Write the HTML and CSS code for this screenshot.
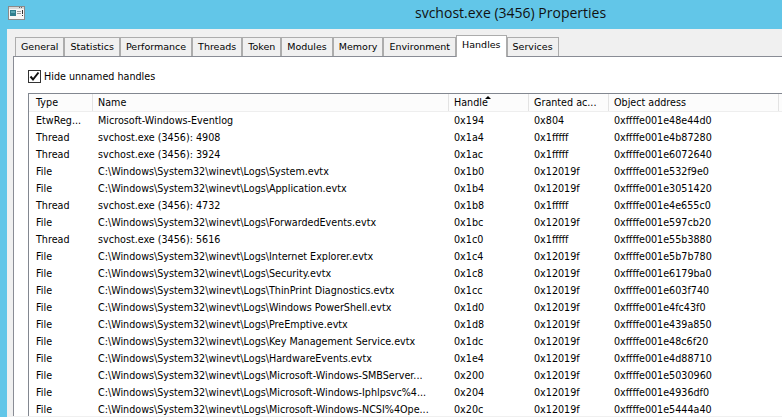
FILE: index.html
```html
<!DOCTYPE html>
<html>
<head>
<meta charset="utf-8">
<link rel="stylesheet" href="styles.css">
</head>
<body>
<div class="titlebar">
  <svg class="app-icon" width="17" height="14" viewBox="0 0 17 14">
    <rect x="0.5" y="0.5" width="16" height="13" fill="#f6f6f6" stroke="#8a8a8a"/>
    <rect x="1" y="1" width="15" height="2" fill="#d9d9d9"/>
    <rect x="11" y="1" width="1" height="1" fill="#666"/>
    <rect x="13" y="1" width="1" height="1" fill="#666"/>
    <rect x="2" y="4" width="6" height="6" fill="#2f7d8e"/>
    <rect x="3" y="5" width="4" height="2" fill="#5aa7b4"/>
    <rect x="9" y="5" width="4" height="1" fill="#9a9a9a"/>
    <rect x="9" y="7" width="4" height="1" fill="#9a9a9a"/>
    <rect x="14" y="4" width="1" height="4" fill="#333"/>
    <rect x="14" y="9" width="1" height="1" fill="#333"/>
  </svg>
  <div class="title">svchost.exe (3456) Properties</div>
</div>
<div class="window">
  <div class="tabs">
    <div class="tab">General</div>
    <div class="tab">Statistics</div>
    <div class="tab">Performance</div>
    <div class="tab">Threads</div>
    <div class="tab">Token</div>
    <div class="tab">Modules</div>
    <div class="tab">Memory</div>
    <div class="tab">Environment</div>
    <div class="tab active">Handles</div>
    <div class="tab">Services</div>
  </div>
  <div class="panel">
    <label class="check-row">
      <span class="checkbox">
        <svg width="11" height="11" viewBox="0 0 11 11"><path d="M1.5 5.5 L4 8.5 L9.5 1.5" fill="none" stroke="#111" stroke-width="2"/></svg>
      </span>
      <span>Hide unnamed handles</span>
    </label>
    <div class="list">
      <div class="row header">
        <div class="cell first">Type</div>
        <div class="cell">Name</div>
        <div class="cell sorted">Handle<span class="sort-arrow"></span></div>
        <div class="cell">Granted ac...</div>
        <div class="cell">Object address</div>
        <div class="cell filler"></div>
      </div>
      <div class="row"><div class="cell first">EtwReg...</div><div class="cell">Microsoft-Windows-Eventlog</div><div class="cell">0x194</div><div class="cell">0x804</div><div class="cell">0xffffe001e48e44d0</div></div>
      <div class="row"><div class="cell first">Thread</div><div class="cell">svchost.exe (3456): 4908</div><div class="cell">0x1a4</div><div class="cell">0x1fffff</div><div class="cell">0xffffe001e4b87280</div></div>
      <div class="row"><div class="cell first">Thread</div><div class="cell">svchost.exe (3456): 3924</div><div class="cell">0x1ac</div><div class="cell">0x1fffff</div><div class="cell">0xffffe001e6072640</div></div>
      <div class="row"><div class="cell first">File</div><div class="cell">C:\Windows\System32\winevt\Logs\System.evtx</div><div class="cell">0x1b0</div><div class="cell">0x12019f</div><div class="cell">0xffffe001e532f9e0</div></div>
      <div class="row"><div class="cell first">File</div><div class="cell">C:\Windows\System32\winevt\Logs\Application.evtx</div><div class="cell">0x1b4</div><div class="cell">0x12019f</div><div class="cell">0xffffe001e3051420</div></div>
      <div class="row"><div class="cell first">Thread</div><div class="cell">svchost.exe (3456): 4732</div><div class="cell">0x1b8</div><div class="cell">0x1fffff</div><div class="cell">0xffffe001e4e655c0</div></div>
      <div class="row"><div class="cell first">File</div><div class="cell">C:\Windows\System32\winevt\Logs\ForwardedEvents.evtx</div><div class="cell">0x1bc</div><div class="cell">0x12019f</div><div class="cell">0xffffe001e597cb20</div></div>
      <div class="row"><div class="cell first">Thread</div><div class="cell">svchost.exe (3456): 5616</div><div class="cell">0x1c0</div><div class="cell">0x1fffff</div><div class="cell">0xffffe001e55b3880</div></div>
      <div class="row"><div class="cell first">File</div><div class="cell">C:\Windows\System32\winevt\Logs\Internet Explorer.evtx</div><div class="cell">0x1c4</div><div class="cell">0x12019f</div><div class="cell">0xffffe001e5b7b780</div></div>
      <div class="row"><div class="cell first">File</div><div class="cell">C:\Windows\System32\winevt\Logs\Security.evtx</div><div class="cell">0x1c8</div><div class="cell">0x12019f</div><div class="cell">0xffffe001e6179ba0</div></div>
      <div class="row"><div class="cell first">File</div><div class="cell">C:\Windows\System32\winevt\Logs\ThinPrint Diagnostics.evtx</div><div class="cell">0x1cc</div><div class="cell">0x12019f</div><div class="cell">0xffffe001e603f740</div></div>
      <div class="row"><div class="cell first">File</div><div class="cell">C:\Windows\System32\winevt\Logs\Windows PowerShell.evtx</div><div class="cell">0x1d0</div><div class="cell">0x12019f</div><div class="cell">0xffffe001e4fc43f0</div></div>
      <div class="row"><div class="cell first">File</div><div class="cell">C:\Windows\System32\winevt\Logs\PreEmptive.evtx</div><div class="cell">0x1d8</div><div class="cell">0x12019f</div><div class="cell">0xffffe001e439a850</div></div>
      <div class="row"><div class="cell first">File</div><div class="cell">C:\Windows\System32\winevt\Logs\Key Management Service.evtx</div><div class="cell">0x1dc</div><div class="cell">0x12019f</div><div class="cell">0xffffe001e48c6f20</div></div>
      <div class="row"><div class="cell first">File</div><div class="cell">C:\Windows\System32\winevt\Logs\HardwareEvents.evtx</div><div class="cell">0x1e4</div><div class="cell">0x12019f</div><div class="cell">0xffffe001e4d88710</div></div>
      <div class="row"><div class="cell first">File</div><div class="cell">C:\Windows\System32\winevt\Logs\Microsoft-Windows-SMBServer...</div><div class="cell">0x200</div><div class="cell">0x12019f</div><div class="cell">0xffffe001e5030960</div></div>
      <div class="row"><div class="cell first">File</div><div class="cell">C:\Windows\System32\winevt\Logs\Microsoft-Windows-Iphlpsvc%4...</div><div class="cell">0x204</div><div class="cell">0x12019f</div><div class="cell">0xffffe001e4936df0</div></div>
      <div class="row"><div class="cell first">File</div><div class="cell">C:\Windows\System32\winevt\Logs\Microsoft-Windows-NCSI%4Ope...</div><div class="cell">0x20c</div><div class="cell">0x12019f</div><div class="cell">0xffffe001e5444a40</div></div>
    </div>
  </div>
</div>
</body>
</html>
```

FILE: styles.css
```css
html, body {
  margin: 0;
  padding: 0;
}
body {
  width: 782px;
  height: 417px;
  overflow: hidden;
  background: #62c6e8;
  font-family: "DejaVu Sans", sans-serif;
  font-size: 9.6px;
  color: #000;
}
.titlebar {
  height: 29px;
  display: flex;
  align-items: flex-start;
}
.app-icon {
  display: block;
  margin: 6px 0 0 8px;
  flex: none;
}
.title {
  margin-left: 390px;
  font-family: "Open Sans", sans-serif;
  font-size: 14px;
  line-height: 20px;
  padding-top: 3px;
  color: #111;
  white-space: nowrap;
}
.window {
  margin-left: 7px;
  width: 775px;
  height: 388px;
  background: #f0f0f0;
  overflow: hidden;
}
.tabs {
  display: flex;
  align-items: flex-end;
  height: 27px;
  margin-left: 8px;
}
.tab {
  box-sizing: border-box;
  height: 19px;
  padding: 0 5px;
  line-height: 17px;
  font-size: 9.5px;
  border: 1px solid #acacac;
  border-bottom: none;
  background: #f0f0f0;
  white-space: nowrap;
}
.tab.active {
  height: 22px;
  margin-bottom: -1px;
  line-height: 17px;
  background: #fff;
  position: relative;
  z-index: 1;
}
.panel {
  margin-left: 6px;
  height: 360px;
  background: #fff;
  border-top: 1px solid #898c95;
  border-left: 1px solid #898c95;
  padding: 13px 0 0 14px;
  box-sizing: border-box;
  overflow: hidden;
}
.check-row {
  display: flex;
  align-items: center;
  gap: 3px;
  height: 13px;
}
.checkbox {
  box-sizing: border-box;
  width: 13px;
  height: 13px;
  border: 1px solid #333;
  background: #fff;
  display: flex;
  align-items: center;
  justify-content: center;
}
.checkbox svg {
  display: block;
}
.list {
  margin-top: 10px;
  border-top: 1px solid #828790;
  border-left: 1px solid #828790;
  background: #fff;
}
.row {
  display: grid;
  grid-template-columns: 64px 356px 80px 80px 170px 1fr;
  height: 17px;
  line-height: 17px;
}
.row.header {
  height: 18px;
  line-height: 17px;
  border-bottom: 1px solid #eeeeee;
  box-sizing: border-box;
  background: #fcfcfc;
}
.cell {
  padding-left: 5px;
  white-space: nowrap;
  overflow: hidden;
}
.cell.first {
  padding-left: 7px;
}
.header .cell {
  border-right: 1px solid #e3e3e3;
  overflow: visible;
}
.header .cell.filler {
  border-right: none;
}
.sorted {
  position: relative;
}
.sort-arrow {
  position: absolute;
  left: 36px;
  top: 2px;
  width: 0;
  height: 0;
  border-left: 3px solid transparent;
  border-right: 3px solid transparent;
  border-bottom: 3px solid #000;
}
```
